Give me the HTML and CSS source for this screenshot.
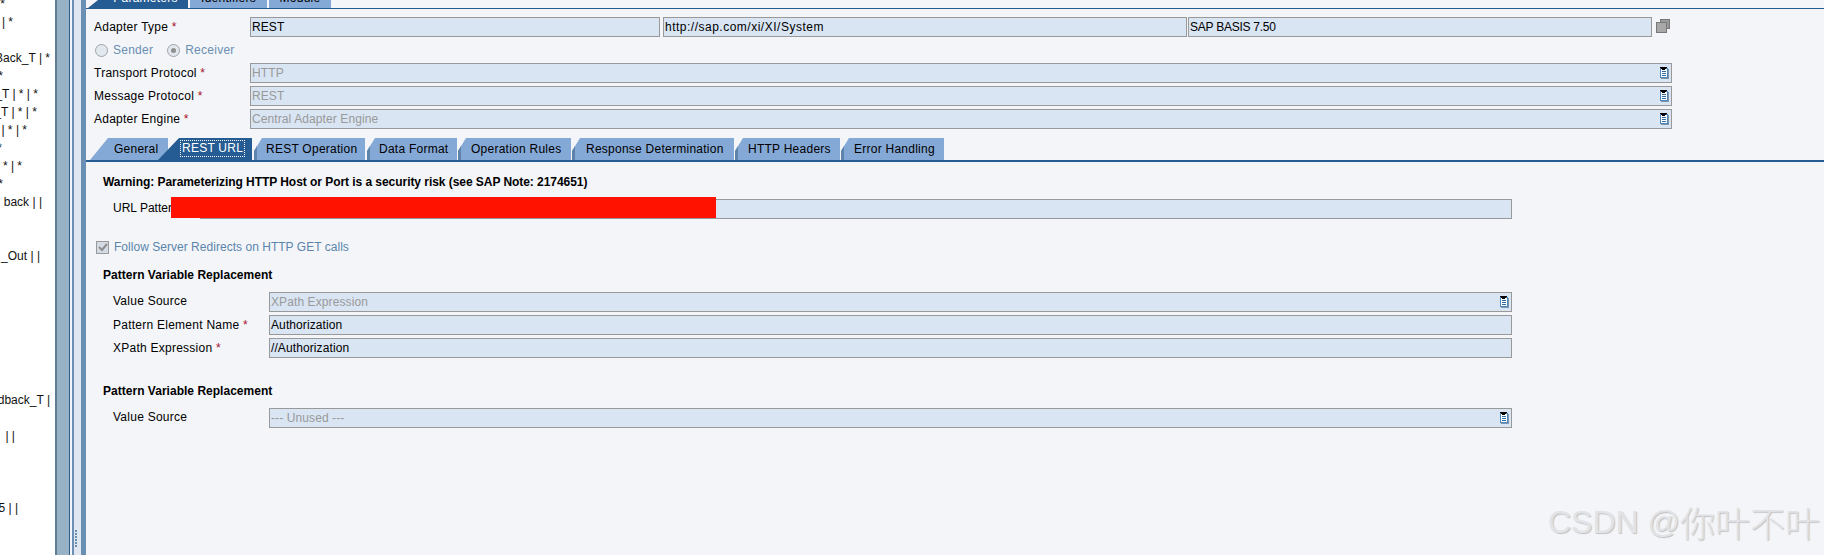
FILE: index.html
```html
<!DOCTYPE html>
<html lang="en">
<head>
<meta charset="utf-8">
<title>Adapter configuration</title>
<link rel="stylesheet" href="styles.css">
</head>
<body>
<svg class="defs" width="0" height="0" aria-hidden="true">
  <symbol id="pick" viewBox="0 0 9 12">
    <rect x="1" y="2" width="8" height="10" fill="#7f96ad"/>
    <rect x="0.5" y="1.5" width="7" height="9" fill="#fff" stroke="#4a86bb"/>
    <path d="M2 4.5h4M2 6.5h4M2 8.5h4" stroke="#2d6ea8"/>
    <path d="M0 0h7v1h-1v1h-1v1h-3v-1h-1v-1h-1z" fill="#000"/>
  </symbol>
</svg>
<div class="page">
  <aside class="tree">
    <div class="tree-row e5">*</div>
    <div class="tree-row e13">| *</div>
    <div class="tree-row"></div>
    <div class="tree-row e50">Back_T | *</div>
    <div class="tree-row e3">*</div>
    <div class="tree-row e38">_T | * | *</div>
    <div class="tree-row e37">_T | * | *</div>
    <div class="tree-row e27">| * | *</div>
    <div class="tree-row e2">*</div>
    <div class="tree-row e22">* | *</div>
    <div class="tree-row e3">*</div>
    <div class="tree-row e42">back | |</div>
    <div class="tree-row"></div>
    <div class="tree-row"></div>
    <div class="tree-row e40">_Out | |</div>
    <div class="tree-row"></div>
    <div class="tree-row"></div>
    <div class="tree-row"></div>
    <div class="tree-row"></div>
    <div class="tree-row"></div>
    <div class="tree-row"></div>
    <div class="tree-row"></div>
    <div class="tree-row e50">dback_T |</div>
    <div class="tree-row"></div>
    <div class="tree-row e15">| |</div>
    <div class="tree-row"></div>
    <div class="tree-row"></div>
    <div class="tree-row"></div>
    <div class="tree-row e18">5 | |</div>
  </aside>
  <div class="splitter"></div>
  <div class="gutter"><span class="grip"></span></div>
  <main class="main">
    <nav class="top-tabs">
      <div class="top-tab top-tab-on">Parameters</div>
      <div class="top-tab">Identifiers</div>
      <div class="top-tab">Module</div>
    </nav>
    <section class="head">
      <div class="row">
        <label class="lab">Adapter Type <em>*</em></label>
        <div class="triple">
          <div class="field f1">REST</div>
          <div class="field f2">http://sap.com/xi/XI/System</div>
          <div class="field f3">SAP BASIS 7.50</div>
          <svg class="copy" width="14" height="14" viewBox="0 0 14 14"><rect x="4.5" y="0.5" width="9" height="9" fill="#9a9a9a" stroke="#777"/><rect x="0.5" y="3.5" width="10" height="10" fill="#a8a8a8" stroke="#777"/></svg>
        </div>
      </div>
      <div class="radios">
        <span class="radio"></span><span class="radio-text r1">Sender</span>
        <span class="radio radio-on"></span><span class="radio-text">Receiver</span>
      </div>
      <div class="row">
        <label class="lab">Transport Protocol <em>*</em></label>
        <div class="field dis select wide">HTTP<svg class="pick"><use href="#pick"/></svg></div>
      </div>
      <div class="row">
        <label class="lab">Message Protocol <em>*</em></label>
        <div class="field dis select wide">REST<svg class="pick"><use href="#pick"/></svg></div>
      </div>
      <div class="row">
        <label class="lab">Adapter Engine <em>*</em></label>
        <div class="field dis select wide">Central Adapter Engine<svg class="pick"><use href="#pick"/></svg></div>
      </div>
    </section>
    <nav class="tabs">
      <div class="tab tab-first">General</div>
      <div class="tab tab-on"><span class="focus">REST URL</span></div>
      <div class="tab t3">REST Operation</div>
      <div class="tab t4">Data Format</div>
      <div class="tab t5">Operation Rules</div>
      <div class="tab t6">Response Determination</div>
      <div class="tab t7">HTTP Headers</div>
      <div class="tab t8">Error Handling</div>
    </nav>
    <section class="body">
      <p class="warn">Warning: Parameterizing HTTP Host or Port is a security risk (see SAP Note: 2174651)</p>
      <div class="url-row">
        <label class="url-lab">URL Pattern</label>
        <div class="field url-field"></div>
        <div class="redact"></div>
      </div>
      <div class="check-row">
        <span class="check"><svg width="10" height="10" viewBox="0 0 10 10"><path d="M1 5l3 3 5-6" fill="none" stroke="#8c8c8c" stroke-width="2"/></svg></span>
        <span class="check-text">Follow Server Redirects on HTTP GET calls</span>
      </div>
      <h3 class="title t-one">Pattern Variable Replacement</h3>
      <div class="sub first">
        <label class="sub-lab">Value Source</label>
        <div class="field dis select grow">XPath Expression<svg class="pick"><use href="#pick"/></svg></div>
      </div>
      <div class="sub">
        <label class="sub-lab">Pattern Element Name <em>*</em></label>
        <div class="field grow">Authorization</div>
      </div>
      <div class="sub">
        <label class="sub-lab">XPath Expression <em>*</em></label>
        <div class="field grow">//Authorization</div>
      </div>
      <h3 class="title t-two">Pattern Variable Replacement</h3>
      <div class="sub first">
        <label class="sub-lab">Value Source</label>
        <div class="field dis select grow">--- Unused ---<svg class="pick"><use href="#pick"/></svg></div>
      </div>
    </section>
    <div class="mark"><span class="mark-lat">CSDN @</span><span class="mark-cjk">你叶不叶</span></div>
  </main>
</div>
</body>
</html>
```
FILE: styles.css
```css
* { box-sizing: border-box; }
html, body { margin: 0; height: 555px; overflow: hidden; }
body { font: 12px/14px "Liberation Sans", Arial, sans-serif; letter-spacing: 0.25px; color: #000; background: #f3f5f9; }
.defs { position: absolute; }
.page { display: flex; height: 555px; }

.tree { width: 55px; flex: none; background: #fff; overflow: hidden; margin-top: -5px; height: 560px; letter-spacing: 0; }
.tree-row { height: 18px; line-height: 18px; display: flex; justify-content: flex-end; white-space: nowrap; color: #111; }
.e2 { width: 2px; } .e3 { width: 3px; } .e5 { width: 5px; } .e13 { width: 13px; } .e15 { width: 15px; }
.e18 { width: 18px; } .e22 { width: 22px; } .e27 { width: 27px; } .e37 { width: 37px; } .e38 { width: 38px; }
.e40 { width: 40px; } .e42 { width: 42px; } .e50 { width: 50px; }

.splitter { width: 15px; flex: none; background: #96b2c4; border-left: 2px solid #5f7c93; border-right: 1px solid #2f5f86; }
.gutter { width: 16px; flex: none; background: #e0e7f1; border-left: 2px solid #f3f5f9; border-right: 5px solid #6a8fb5; position: relative; }
.gutter::before { content: ""; position: absolute; left: 0; top: 0; bottom: 0; width: 2px; background: #6c90b4; }
.grip { position: absolute; left: 3px; top: 530px; width: 2px; height: 18px; background: repeating-linear-gradient(#6a8fb5 0 2px, transparent 2px 3px); }

.main { flex: 1; min-width: 0; position: relative; background: #f3f5f9; }
.top-tabs { height: 9px; display: flex; padding-left: 2px; border-bottom: 1px solid #255c93; overflow: hidden; }
.top-tab { height: 8px; background: #85a9d6; line-height: 14px; margin-right: 2px; width: 62px; color: #000; overflow: hidden; display: flex; align-items: flex-end; justify-content: center; padding-bottom: 3px; }
.top-tab:nth-child(1) { width: 100px; padding-left: 15px; background: #255c93; color: #fff; clip-path: polygon(10px 0, 100% 0, 100% 100%, 0 100%); }
.top-tab:nth-child(2) { width: 77px; }

.head { padding: 8px 0 0 8px; }
.row { display: flex; height: 20px; margin-bottom: 3px; align-items: center; }
.lab { width: 156px; flex: none; }
.lab em, .sub-lab em { color: #a8102a; font-style: normal; }
.field { height: 20px; background: #d9e5f3; border: 1px solid #999; padding: 1px 1px; line-height: 16px; letter-spacing: 0.1px; white-space: nowrap; position: relative; }
.triple { display: flex; align-items: center; }
.f1 { width: 410px; }
.f2 { width: 524px; margin-left: 3px; letter-spacing: 0.5px; }
.f3 { width: 464px; margin-left: 1px; letter-spacing: -0.25px; }
.copy { margin-left: 4px; margin-top: -3px; }
.wide { width: 1422px; }
.dis { color: #999; }
.pick { position: absolute; right: 2px; top: 3px; width: 9px; height: 12px; }

.radios { display: flex; align-items: center; height: 18px; margin: 4px 0 4px 1px; }
.radio { width: 13px; height: 13px; border-radius: 50%; border: 1px solid #a3a3a3; background: #e2e8ef; display: flex; align-items: center; justify-content: center; }
.radio-on::after { content: ""; width: 5px; height: 5px; border-radius: 50%; background: #8f8f8f; }
.radio-text { margin-left: 5px; color: #6b8fb2; }
.r1 { margin-right: 14px; }

.tabs { display: flex; height: 24px; margin-top: 9px; padding: 0 0 0 4px; border-bottom: 2px solid #255c93; }
.tab { flex: none; height: 22px; background: #85a9d6; line-height: 22px; padding: 0 0 0 13px; margin-left: 1px; white-space: nowrap; clip-path: polygon(0 100%, 0 13px, 8px 0, 100% 0, 100% 100%); box-shadow: inset 3px 0 0 #5f84ac; }
.tab-first { width: 78px; margin-left: 0; padding-left: 24px; box-shadow: none; clip-path: polygon(0 100%, 18px 0, 100% 0, 100% 100%); }
.tab-on { width: 94px; margin-left: -10px; padding: 2px 7px 0 22px; background: #255c93; color: #fff; box-shadow: none; clip-path: polygon(0 100%, 21px 0, 100% 0, 100% 100%); }
.t3 { width: 111px; margin-left: 2px; padding-left: 12px; }
.t4 { width: 90px; margin-left: 2px; padding-left: 12px; }
.t5 { width: 113px; padding-left: 13px; }
.t6 { width: 162px; padding-left: 14px; }
.t7 { width: 105px; }
.t8 { width: 103px; }
.focus { display: block; border: 1px dotted #fff; height: 17px; padding: 0 1px; line-height: 15px; }

.body { padding: 0 0 0 17px; }
.warn { margin: 0; font-weight: bold; letter-spacing: -0.05px; padding-top: 13px; height: 35px; }
.url-row { display: flex; align-items: flex-start; position: relative; height: 22px; }
.url-lab { width: 87px; flex: none; margin-left: 10px; line-height: 22px; letter-spacing: 0; overflow: hidden; white-space: nowrap; }
.url-field { margin-top: 2px; width: 1312px; }
.redact { position: absolute; left: 68px; top: 0; width: 545px; height: 21px; background: #ff1200; }
.check-row { display: flex; align-items: center; margin: 21px 0 0 -7px; height: 14px; }
.check { width: 13px; height: 13px; border: 1px solid #999; background: #d4dbe4; display: flex; align-items: center; justify-content: center; }
.check-text { margin-left: 5px; color: #5c85ac; letter-spacing: 0.03px; }
.title { font-size: 12px; line-height: 14px; font-weight: bold; letter-spacing: 0.02px; margin: 0; }
.t-one { margin-top: 14px; }
.t-two { margin-top: 26px; }
.sub { display: flex; align-items: center; margin-top: 3px; margin-left: 10px; }
.sub.first { margin-top: 10px; }
.sub.first .sub-lab { margin-top: -2px; }
.sub-lab { width: 156px; flex: none; }
.grow { width: 1243px; }

.mark { position: absolute; right: 4px; top: 502px; color: #e2e3e7; letter-spacing: 0; white-space: nowrap; line-height: 40px; text-shadow: 1px 1px 1px #c0c0c0; display: flex; align-items: center; }
.mark-lat { font-size: 32px; white-space: pre; }
.mark-cjk { font-family: "Noto Sans CJK SC", sans-serif; font-size: 35px; font-weight: 300; }
```
